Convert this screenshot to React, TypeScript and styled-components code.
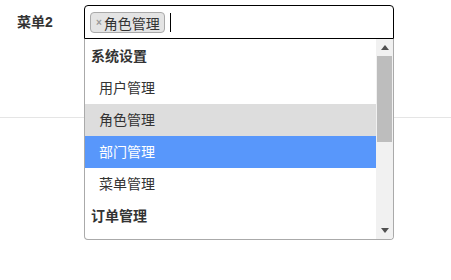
import React from "react";
import styled, { createGlobalStyle } from "styled-components";

const GlobalStyle = createGlobalStyle`
    html, body {
        margin: 0;
        background: #ffffff;
        font-family: "Liberation Sans", "Noto Sans CJK SC", sans-serif;
        color: #333333;
    }
`;

const Page = styled.div`
    min-height: 280px;
    background: #ffffff;
`;

const Section = styled.div`
    padding: 5px 0 78px;
    border-bottom: 1px solid #e5e5e5;
`;

const FormRow = styled.div`
    display: flex;
    align-items: flex-start;
`;

const Label = styled.label`
    box-sizing: border-box;
    width: 84px;
    padding-left: 17px;
    font-size: 14px;
    font-weight: bold;
    line-height: 34px;
    color: #333333;
`;

const Field = styled.div`
    position: relative;
    z-index: 2;
    width: 310px;
`;

const SelectBox = styled.div`
    box-sizing: border-box;
    height: 34px;
    border: 1px solid #000000;
    border-radius: 4px 4px 0 0;
    padding: 6px 5px 0;
    display: flex;
    align-items: flex-start;
`;

const Tag = styled.span`
    display: inline-flex;
    align-items: center;
    height: 21px;
    box-sizing: border-box;
    padding: 0 4px 0 5px;
    background: #e4e4e4;
    border: 1px solid #aaaaaa;
    border-radius: 4px;
    font-size: 14px;
    color: #333333;
`;

const TagRemove = styled.span`
    color: #999999;
    font-size: 10px;
    font-weight: bold;
    margin-right: 2px;
`;

const Caret = styled.span`
    width: 1px;
    height: 19px;
    margin: 1px 0 0 5px;
    background: #000000;
`;

const Dropdown = styled.div`
    position: absolute;
    top: 100%;
    left: 0;
    right: 0;
    box-sizing: border-box;
    height: 201px;
    border: 1px solid #aaaaaa;
    border-top: none;
    border-radius: 0 0 4px 4px;
    background: #ffffff;
    display: flex;
    overflow: hidden;
`;

const OptionList = styled.ul`
    flex: 1;
    margin: 0;
    padding: 1px 0 0;
    list-style: none;
    overflow: hidden;
`;

const Option = styled.li<{ $group?: boolean; $state?: "hover" | "active" }>`
    height: 32px;
    line-height: 32px;
    font-size: 14px;
    padding-left: ${(p) => (p.$group ? "6px" : "14px")};
    font-weight: ${(p) => (p.$group ? "bold" : "normal")};
    color: ${(p) => (p.$state === "active" ? "#ffffff" : "#333333")};
    background: ${(p) =>
        p.$state === "active" ? "#5897fb" : p.$state === "hover" ? "#dddddd" : "transparent"};
`;

const Scrollbar = styled.div`
    width: 17px;
    background: #f1f1f1;
    display: flex;
    flex-direction: column;
`;

const ScrollButton = styled.div`
    height: 17px;
    display: flex;
    align-items: center;
    justify-content: center;
`;

const Track = styled.div`
    flex: 1;
    padding: 0 1px 0 1px;
`;

const Thumb = styled.div`
    height: 86px;
    background: #bdbdbd;
`;

const Arrow: React.FC<{ down?: boolean }> = ({ down }) => (
    <svg width="8" height="5" viewBox="0 0 8 5">
        <path d={down ? "M0 0 L8 0 L4 5 Z" : "M0 5 L8 5 L4 0 Z"} fill="#505050" />
    </svg>
);

const options: { text: string; group?: boolean; state?: "hover" | "active" }[] = [
    { text: "系统设置", group: true },
    { text: "用户管理" },
    { text: "角色管理", state: "hover" },
    { text: "部门管理", state: "active" },
    { text: "菜单管理" },
    { text: "订单管理", group: true },
];

export default function App() {
    return (
        <Page>
            <GlobalStyle />
            <Section>
                <FormRow>
                    <Label>菜单2</Label>
                    <Field>
                        <SelectBox>
                            <Tag>
                                <TagRemove>×</TagRemove>角色管理
                            </Tag>
                            <Caret />
                        </SelectBox>
                        <Dropdown>
                            <OptionList>
                                {options.map((o) => (
                                    <Option key={o.text} $group={o.group} $state={o.state}>
                                        {o.text}
                                    </Option>
                                ))}
                            </OptionList>
                            <Scrollbar>
                                <ScrollButton>
                                    <Arrow />
                                </ScrollButton>
                                <Track>
                                    <Thumb />
                                </Track>
                                <ScrollButton>
                                    <Arrow down />
                                </ScrollButton>
                            </Scrollbar>
                        </Dropdown>
                    </Field>
                </FormRow>
            </Section>
        </Page>
    );
}
